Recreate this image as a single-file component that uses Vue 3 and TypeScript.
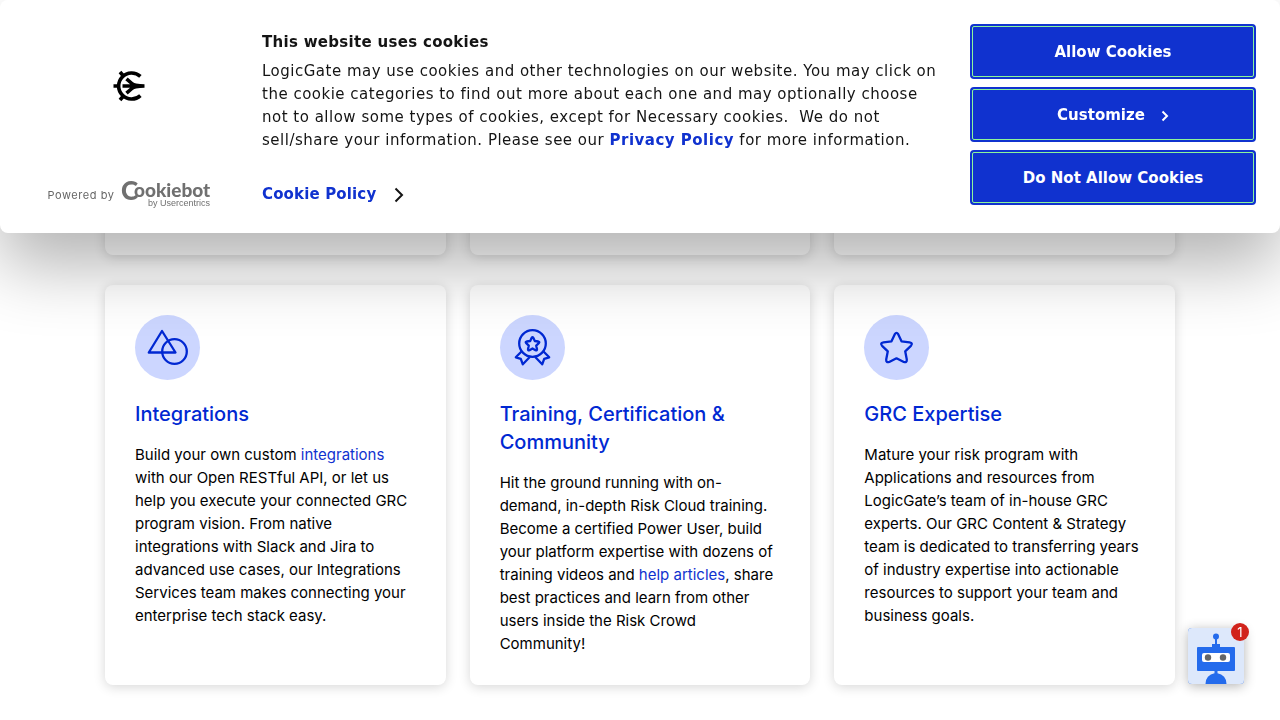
<script setup lang="ts">
import { ref } from 'vue'

type Part = { text: string; link?: boolean }
type Card = { icon: 'shapes' | 'award' | 'star'; title: string; body: Part[] }

const cards: Card[] = [
  {
    icon: 'shapes',
    title: 'Integrations',
    body: [
      { text: 'Build your own custom ' },
      { text: 'integrations', link: true },
      {
        text: ' with our Open RESTful API, or let us help you execute your connected GRC program vision. From native integrations with Slack and Jira to advanced use cases, our Integrations Services team makes connecting your enterprise tech stack easy.',
      },
    ],
  },
  {
    icon: 'award',
    title: 'Training, Certification & Community',
    body: [
      {
        text: 'Hit the ground running with on-demand, in-depth Risk Cloud training. Become a certified Power User, build your platform expertise with dozens of training videos and ',
      },
      { text: 'help articles', link: true },
      { text: ', share best practices and learn from other users inside the Risk Crowd Community!' },
    ],
  },
  {
    icon: 'star',
    title: 'GRC Expertise',
    body: [
      {
        text: 'Mature your risk program with Applications and resources from LogicGate’s team of in-house GRC experts. Our GRC Content & Strategy team is dedicated to transferring years of industry expertise into actionable resources to support your team and business goals.',
      },
    ],
  },
]

const unread = ref<number>(1)
</script>

<template>
  <div class="page">
    <section class="banner" role="dialog" aria-labelledby="cookie-title">
      <div class="brand">
        <svg class="mark" viewBox="0 0 32 32" role="img" aria-label="LogicGate">
          <g fill="none" stroke="#000" stroke-width="3.6">
            <path d="M27.400 6.400A13 13 0 1 0 27.400 25.600" />
            <path d="M0.500 16H5M9.500 16H25" />
            <path d="M7 2L10 5.500M7 30L10 26.500" />
            <path d="M13.500 8.800L20 14.500M13.500 23.200L20 17.500" />
          </g>
          <path d="M17 11Q22 14.200 31.500 14.200V17.800Q22 17.800 17 21Z" />
        </svg>
        <a class="powered" href="#cookiebot">
          <span>Powered by</span>
          <svg class="cookiebot" viewBox="0 0 88 30" role="img" aria-label="Cookiebot by Usercentrics">
            <text class="bot-c" x="-1" y="20">C</text>
            <text class="bot-rest" x="12" y="17">ookiebot</text>
            <text class="bot-by" x="88" y="26" text-anchor="end">by Usercentrics</text>
          </svg>
        </a>
      </div>
      <div class="message">
        <h2 id="cookie-title">This website uses cookies</h2>
        <p>
          LogicGate may use cookies and other technologies on our website. You may click on the cookie
          categories to find out more about each one and may optionally choose not to allow some types
          of cookies, except for Necessary cookies.&nbsp; We do not sell/share your information. Please
          see our <a href="#privacy">Privacy Policy</a> for more information.
        </p>
        <a class="policy" href="#cookie-policy">
          Cookie Policy
          <svg viewBox="0 0 10 16" aria-hidden="true"><path d="M1.500 1.500L8 8L1.500 14.500" /></svg>
        </a>
      </div>
      <div class="actions">
        <button type="button">Allow Cookies</button>
        <button type="button">
          Customize
          <svg viewBox="0 0 8 12" aria-hidden="true"><path d="M1.500 1.500L6 6L1.500 10.500" /></svg>
        </button>
        <button type="button">Do Not Allow Cookies</button>
      </div>
    </section>

    <main class="grid">
      <div v-for="n in 3" :key="n" class="card upper"></div>
      <article v-for="card in cards" :key="card.title" class="card">
        <span class="icon">
          <svg v-if="card.icon === 'shapes'" viewBox="0 0 65 65" aria-hidden="true">
            <path d="M27 16L13.800 37.500H40.500Z" />
            <circle cx="39.500" cy="36.500" r="12.300" />
          </svg>
          <svg v-else-if="card.icon === 'award'" viewBox="0 0 65 65" aria-hidden="true">
            <circle cx="32.500" cy="28.500" r="13.300" />
            <path
              d="M31.700 22.800Q32.500 21.500 33.300 22.800L34.800 26L38.300 26.500Q40 27 38.800 28.200L36.200 30.600L37 34.200Q37 35.800 35.500 35.200L32.500 33.500L29.500 35.200Q28 35.800 28 34.200L28.800 30.600L26.200 28.200Q25 27 26.700 26.500L30.200 26Z"
            />
            <path d="M21.500 36.500L15.800 42.300L20.800 43.800L22.800 49.300L29.800 42" />
            <path d="M43.500 36.500L49.200 42.300L44.200 43.800L42.200 49.300L35.200 42" />
          </svg>
          <svg v-else viewBox="0 0 65 65" aria-hidden="true">
            <path
              d="M30.800 19.200Q32.500 16.700 34.200 19.200L37.500 26.300L45.500 27.300Q49.300 28 46.900 30.800L41.200 36.300L42.800 44.500Q43 48 39.800 47L32.500 43.300L25.200 47Q22 48 22.200 44.500L23.800 36.300L18.100 30.800Q15.700 28 19.500 27.300L27.500 26.300Z"
            />
          </svg>
        </span>
        <h3>{{ card.title }}</h3>
        <p>
          <template v-for="(part, i) in card.body" :key="i"
            ><a v-if="part.link" href="#more">{{ part.text }}</a
            ><template v-else>{{ part.text }}</template></template
          >
        </p>
      </article>
    </main>

    <button class="chat" type="button" aria-label="Open chat">
      <svg viewBox="0 0 56 56" aria-hidden="true">
        <rect width="56" height="56" rx="4" fill="#dde8fb" />
        <g fill="#246bec">
          <circle cx="28" cy="8.500" r="3" />
          <path d="M27 10h2v6h3v3h-8v-3h3z" />
          <rect x="9" y="19" width="38" height="24" rx="1" />
          <path d="M26.500 43h3v2.200A10.500 10.500 0 0 1 38.500 56h-21A10.500 10.500 0 0 1 26.500 45.200z" />
        </g>
        <rect x="14" y="25" width="28" height="9" rx="2" fill="#fff" />
        <circle cx="20" cy="29.500" r="3.200" fill="#666" />
        <circle cx="35" cy="29.500" r="3.200" fill="#666" />
      </svg>
      <span class="badge">{{ unread }}</span>
    </button>
  </div>
</template>

<style>
body {
  margin: 0;
  background: #fff;
}
</style>

<style scoped>
.page {
  min-height: 100vh;
  overflow: hidden;
  box-sizing: border-box;
  padding-bottom: 35px;
  font-family: Inter, "Liberation Sans", sans-serif;
  color: #000;
}
a {
  color: #1032cf;
  text-decoration: none;
}
h2,
h3,
p {
  margin: 0;
}
.banner {
  position: fixed;
  z-index: 5;
  top: 0;
  left: 0;
  right: 0;
  box-sizing: border-box;
  display: grid;
  grid-template-columns: 210px minmax(0, 1fr) 286px;
  padding: 24px 24px 27px;
  background: #fff;
  border-radius: 8px;
  box-shadow: 0 32px 68px rgba(0, 0, 0, 0.3);
  font-family: "DejaVu Sans", sans-serif;
  font-size: 15px;
  line-height: 23px;
  color: #141414;
}
.brand {
  display: flex;
  flex-direction: column;
  align-items: center;
  justify-content: space-between;
  padding-top: 46px;
}
.mark {
  width: 32px;
  height: 32px;
}
.powered {
  display: flex;
  align-items: center;
  gap: 8px;
  height: 22px;
  font-family: Inter, sans-serif;
  font-size: 11px;
  line-height: 16px;
  letter-spacing: 0.05em;
  color: #666;
}
.cookiebot {
  width: 88px;
  height: 30px;
  overflow: visible;
  fill: #707070;
  letter-spacing: 0;
}
.bot-c {
  font: 900 26px Lato, sans-serif;
}
.bot-rest {
  font: 900 19px Lato, sans-serif;
}
.bot-by {
  font: 400 9px "Liberation Sans", sans-serif;
}
.message {
  display: flex;
  flex-direction: column;
  align-items: flex-start;
  padding: 7px 28px 0;
}
.message h2 {
  margin-bottom: 6px;
  font-size: 15px;
  line-height: 23px;
  letter-spacing: 0.02em;
}
.message p {
  letter-spacing: 0.5px;
}
.message a {
  font-weight: 700;
}
.policy {
  display: flex;
  align-items: center;
  gap: 18px;
  margin-top: 31px;
  letter-spacing: 0.01em;
}
.policy svg {
  width: 10px;
  height: 16px;
  fill: none;
  stroke: #141414;
  stroke-width: 2;
}
.actions {
  display: flex;
  flex-direction: column;
  gap: 8px;
}
.actions button {
  display: flex;
  align-items: center;
  justify-content: center;
  gap: 16px;
  height: 55px;
  padding: 0 8px;
  border: 2px solid #1032cf;
  border-radius: 4px;
  outline: 1px solid #8cf59a;
  outline-offset: -3px;
  background: #1032cf;
  color: #fff;
  font: 700 15px "DejaVu Sans", sans-serif;
}
.actions svg {
  width: 8px;
  height: 12px;
  margin-top: 3px;
  fill: none;
  stroke: #fff;
  stroke-width: 2;
}
.grid {
  display: grid;
  grid-template-columns: repeat(3, minmax(0, 1fr));
  gap: 30px 24px;
  max-width: 1070px;
  margin: 0 auto;
}
.card {
  box-sizing: border-box;
  padding: 30px;
  border-radius: 8px;
  background: #fff;
  box-shadow: 0 2px 12px rgba(0, 0, 0, 0.16);
}
.upper {
  min-height: 255px;
}
.icon {
  display: block;
  width: 65px;
  height: 65px;
  border-radius: 50%;
  background: #ccd6ff;
}
.icon svg {
  display: block;
  fill: none;
  stroke: #0028d2;
  stroke-width: 2.3;
  stroke-linejoin: round;
}
.card h3 {
  margin: 20px 0 15px;
  font-size: 20px;
  line-height: 28px;
  font-weight: 500;
  color: #0028d2;
}
.card p {
  font-size: 15px;
  line-height: 23px;
}
.chat {
  position: fixed;
  right: 36px;
  bottom: 36px;
  width: 56px;
  height: 56px;
  padding: 0;
  border: 0;
  border-radius: 4px;
  background: #246bec;
  box-shadow: 0 2px 12px rgba(0, 0, 0, 0.3);
}
.chat svg {
  display: block;
}
.badge {
  position: absolute;
  top: -5px;
  right: -5px;
  width: 18px;
  height: 18px;
  border-radius: 50%;
  background: #d1231b;
  color: #fff;
  font: 400 13px/18px Inter, sans-serif;
  text-align: center;
}
</style>
